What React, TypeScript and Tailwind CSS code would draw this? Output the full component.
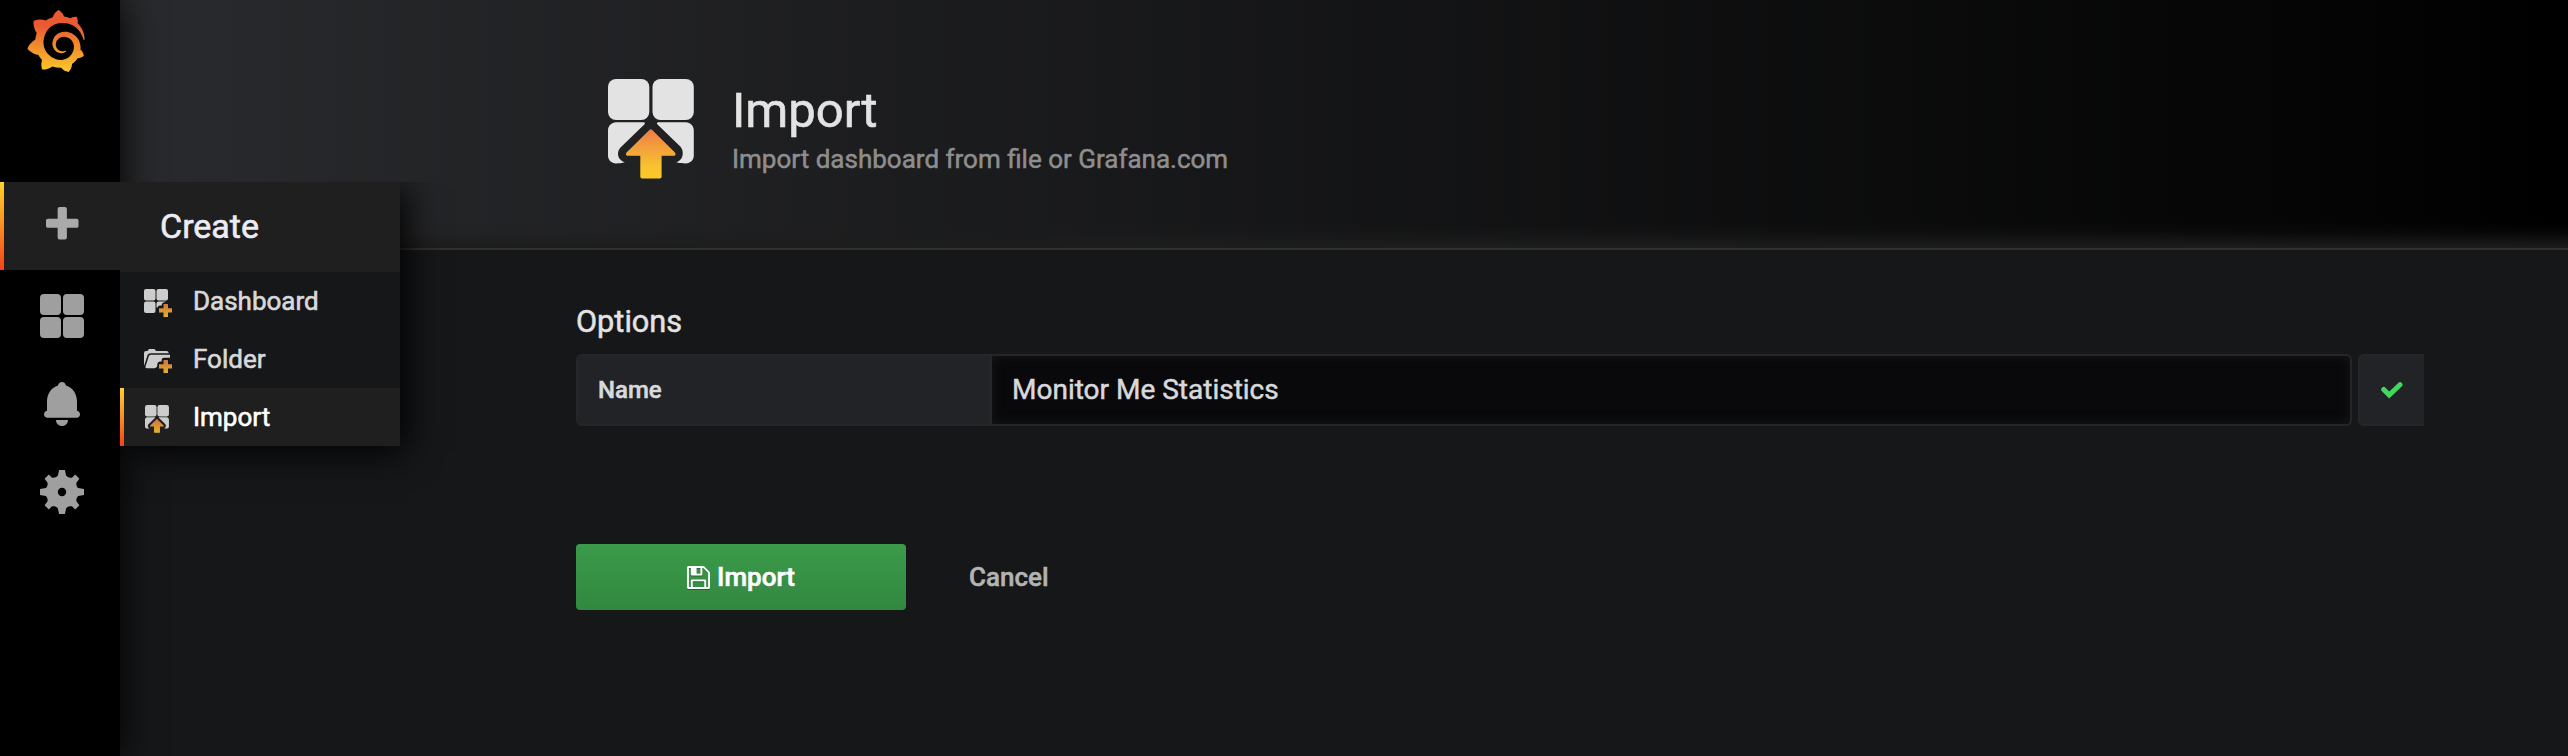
import React from "react";
import { SiGrafana } from "react-icons/si";

function GrafanaLogo() {
  return (
    <>
      <svg className="absolute h-0 w-0">
        <defs>
          <linearGradient id="logo" x1="0" y1="0" x2="0" y2="1">
            <stop offset="0.25" stopColor="#ea5931" />
            <stop offset="1" stopColor="#fbca2a" />
          </linearGradient>
        </defs>
      </svg>
      <SiGrafana className="block h-[62px] w-[62px]" fill="url(#logo)" />
    </>
  );
}

function Tiles({ className }: { className: string }) {
  return (
    <svg className={className} viewBox="0 0 44 44" fill="currentColor">
      <rect width="21" height="21" rx="4" />
      <rect x="23" width="21" height="21" rx="4" />
      <rect y="23" width="21" height="21" rx="4" />
      <rect x="23" y="23" width="21" height="21" rx="4" />
    </svg>
  );
}

function Bell() {
  return (
    <svg className="h-[44px] w-[36px]" viewBox="0 0 36 44" fill="currentColor">
      <path d="M18 0C20 0 21.7 1.5 22 3.6C28.5 5.4 33 12 33 19.5V28.8C34.8 29.2 36 30.6 36 32.3C36 34.3 34.5 35.7 32.5 35.7H3.5C1.5 35.7 0 34.3 0 32.3C0 30.6 1.2 29.2 3 28.8V19.5C3 12 7.5 5.4 14 3.6C14.3 1.5 16 0 18 0Z" />
      <path d="M12 38H24C24 41.5 21.3 44 18 44S12 41.5 12 38Z" />
    </svg>
  );
}

function Gear() {
  return (
    <svg className="h-[44px] w-[44px]" viewBox="-22 -22 44 44" fill="currentColor">
      <path
        fillRule="evenodd"
        d="M-2.9 -22H2.9L4.2 -16.2C5.8 -14.4 8.6 -14 10.2 -14.6L13.2 -17.4L17.4 -13.2L14.6 -9.6C14 -8 14.4 -5.6 16.2 -4L22 -2.9V2.9L16.2 4C14.4 5.6 14 8 14.6 9.6L17.4 13.2L13.2 17.4L10.2 14.6C8.6 14 5.8 14.4 4.2 16.2L2.9 22H-2.9L-4.2 16.2C-5.8 14.4 -8.6 14 -10.2 14.6L-13.2 17.4L-17.4 13.2L-14.6 9.6C-14 8 -14.4 5.6 -16.2 4L-22 2.9V-2.9L-16.2 -4C-14.4 -5.6 -14 -8 -14.6 -9.6L-17.4 -13.2L-13.2 -17.4L-10.2 -14.6C-8.6 -14 -5.8 -14.4 -4.2 -16.2ZM0 -4.2A4.2 4.2 0 1 0 0 4.2A4.2 4.2 0 1 0 0 -4.2Z"
      />
    </svg>
  );
}

function OrangeGradient({ id }: { id: string }) {
  return (
    <defs>
      <linearGradient id={id} x1="0" y1="0" x2="0" y2="1">
        <stop offset="0" stopColor="#ee7c49" />
        <stop offset="0.75" stopColor="#f8c22e" />
        <stop offset="1" stopColor="#fbca28" />
      </linearGradient>
    </defs>
  );
}

function MutedOrangeGradient({ id }: { id: string }) {
  return (
    <defs>
      <linearGradient id={id} x1="0" y1="0" x2="0" y2="1">
        <stop offset="0" stopColor="#d3733f" />
        <stop offset="1" stopColor="#e0b42a" />
      </linearGradient>
    </defs>
  );
}

function ImportIcon({ className, id, muted }: { className: string; id: string; muted?: boolean }) {
  return (
    <svg className={className} viewBox="0 0 86 100" fill="currentColor">
      {muted ? <MutedOrangeGradient id={id} /> : <OrangeGradient id={id} />}
      <rect width="41.3" height="41" rx="8" />
      <rect x="44.5" width="41.3" height="41" rx="8" />
      <path d="M8 43.3H35.5C37 43.3 37.3 44.5 36.3 45.5L12.5 68.5C9.3 72 9.3 77 12 80.3C13.5 82 15 82.7 16.8 83.3C14 84.3 11 84.4 8 84.4C3.5 84.4 0 81 0 76.5V51.3C0 47 3.5 43.3 8 43.3Z" />
      <path d="M77.8 43.3H50.3C48.8 43.3 48.5 44.5 49.5 45.5L72.3 67.5C75.5 71 75.5 77 72.8 80.3C71.3 82 70 82.7 68.2 83.3C71 84.3 74 84.4 77.8 84.4C82.3 84.4 85.8 81 85.8 76.5V51.3C85.8 47 82.3 43.3 77.8 43.3Z" />
      <path
        fill={`url(#${id})`}
        d="M41.4 50.9C42.3 50 43.3 50 44.2 50.9L66.7 73.2C68.3 75 67.5 76.8 65.5 76.8H53.6V97.5C53.6 98.8 53 99.4 51.7 99.4H34.3C33 99.4 32.3 98.8 32.3 97.5V76.8H20C18 76.8 17.2 75 18.8 73.2Z"
      />
    </svg>
  );
}

function DashboardPlus() {
  return (
    <svg className="h-[28px] w-[28px]" viewBox="0 0 28 28" fill="currentColor">
      <MutedOrangeGradient id="dash-plus" />
      <rect width="11.5" height="11.5" rx="2" />
      <rect x="12.5" width="11.5" height="11.5" rx="2" />
      <rect y="12.5" width="11.5" height="11.5" rx="2" />
      <path d="M14.5 12.5H22Q21.5 13.2 19.5 13.4Q18 13.6 17.8 15.5V16.5H16Q14 16.5 13.6 18.5H12.5V14.5Q12.5 12.5 14.5 12.5Z" />
      <path fill="url(#dash-plus)" d="M19.5 15H24V19.3H28V23.6H24V28H19.5V23.6H15V19.3H19.5Z" />
    </svg>
  );
}

function FolderPlus() {
  return (
    <svg className="h-[24px] w-[28px]" viewBox="0 0 28 24" fill="currentColor">
      <MutedOrangeGradient id="folder-plus" />
      <path d="M2 2H3.5L5 0H10.5L12 2H22.5Q24.5 2 24.8 4.3H7Q4.2 4.3 3.6 6L0.2 16.5H0V4Q0 2 2 2Z" />
      <path d="M6.7 5.8H26V8.8H20Q18 8.8 17.7 10.5V12.5H16Q13.5 12.7 13.3 15V17Q12.8 19 10.5 19.2H2.5Q1 19 1.5 17.5L4.8 7.3Q5.2 5.8 6.7 5.8Z" />
      <path fill="url(#folder-plus)" d="M19.5 11H24V15.3H28V19.6H24V24H19.5V19.6H15V15.3H19.5Z" />
    </svg>
  );
}

function SaveIcon() {
  return (
    <svg className="h-[23px] w-[23px] drop-shadow-[0_1px_0_rgba(0,0,0,0.3)]" viewBox="0 0 1536 1536" fill="currentColor">
      <path d="M384 1408h768v-384H384v384zm896 0h128V512q0-14-10-38.500t-20-34.500l-281-281q-10-10-34-20t-39-10v416q0 40-28 68t-68 28H352q-40 0-68-28t-28-68V128H128v1280h128V992q0-40 28-68t68-28h832q40 0 68 28t28 68v416zM896 480V160q0-13-9.500-22.500T864 128H672q-13 0-22.500 9.500T640 160v320q0 13 9.500 22.500T672 512h192q13 0 22.500-9.500T896 480zm640 32v928q0 40-28 68t-68 28H96q-40 0-68-28t-28-68V96q0-40 28-68T96 0h928q40 0 88 20t76 48l280 280q28 28 48 76t20 88z" />
    </svg>
  );
}

function MenuItem({ icon, label, active }: { icon: React.ReactNode; label: string; active?: boolean }) {
  return (
    <a className={active ? "flex h-[58px] items-center bg-[#1f1f20] text-white" : "flex h-[58px] items-center text-[#d8d9da]"}>
      <span className={active ? "h-full w-1 bg-[linear-gradient(#fed42a,#f8421a)]" : "h-full w-1"} />
      <span className="ml-5 flex w-[49px] items-center pt-1 text-[#cdcdce]">{icon}</span>
      <span className="text-[26px] leading-none [-webkit-text-stroke:0.6px_currentColor]">{label}</span>
    </a>
  );
}

export default function App() {
  return (
    <div className="flex h-[756px] w-full overflow-hidden bg-[#161719] font-[Roboto,sans-serif] text-[#d8d9da]">
      <aside className="relative z-10 flex h-full w-[120px] shrink-0 flex-col bg-black text-[#9f9f9f] shadow-[0_0_36px_black]">
        <div className="h-[182px] pt-[10px] pl-[25px]">
          <GrafanaLogo />
        </div>
        <nav className="flex flex-col">
          <div className="relative flex h-[88px] items-center bg-[#1f1f20]">
            <span className="h-full w-1 bg-[linear-gradient(#fed42a,#f8421a)]" />
            <svg className="mb-[5px] ml-[42px] h-[33px] w-[33px]" viewBox="0 0 34 34" fill="#aaaaaa">
              <path d="M14 0H19.500Q21.500 0 21.500 2V12H31.500Q33.500 12 33.500 14V19.500Q33.500 21.500 31.500 21.500H21.500V31.500Q21.500 33.500 19.500 33.500H14Q12 33.500 12 31.500V21.500H2Q0 21.500 0 19.500V14Q0 12 2 12H12V2Q12 0 14 0Z" />
            </svg>
            <div className="absolute top-0 left-[120px] flex w-[280px] flex-col bg-[#161719] shadow-[5px_5px_34px_black] [clip-path:inset(0_-80px_-80px_0)]">
              <div className="h-[90px] bg-[#1f1f20] pl-10 text-[34px] leading-[88px] text-[#ececf4] [-webkit-text-stroke:0.6px_currentColor]">
                Create
              </div>
              <MenuItem icon={<DashboardPlus />} label="Dashboard" />
              <MenuItem icon={<FolderPlus />} label="Folder" />
              <MenuItem icon={<ImportIcon id="menu-import" muted className="ml-px h-[28px] w-[24px]" />} label="Import" active />
            </div>
          </div>
          <div className="flex h-[88px] items-center pt-1 pl-10">
            <Tiles className="h-[44px] w-[44px]" />
          </div>
          <div className="flex h-[88px] items-center pt-1 pl-[44px]">
            <Bell />
          </div>
          <div className="flex h-[88px] items-center pt-1 pl-10">
            <Gear />
          </div>
        </nav>
      </aside>

      <div className="flex min-w-0 flex-1 flex-col">
        <header className="flex h-[250px] shrink-0 border-b-2 border-[#303031] bg-[linear-gradient(to_top,#1d1d1d,#1d1d1d99_8px,#1d1d1d33_16px,#1d1d1d00_26px),linear-gradient(to_right,#292a2d,#000000)] pt-[79px] pl-[488px]">
          <ImportIcon id="header-import" className="h-[100px] w-[86px] text-[#e3e3e3]" />
          <div className="pl-[38px]">
            <h1 className="mt-[5px] text-[49px] leading-[54px] text-[#e3e3e3] [-webkit-text-stroke:0.6px_currentColor]">Import</h1>
            <p className="mt-[5px] text-[26px] leading-8 text-[#8e8e8e] [-webkit-text-stroke:0.5px_currentColor]">
              Import dashboard from file or Grafana.com
            </p>
          </div>
        </header>
        <main className="flex flex-col pt-[52px] pl-[456px]">
          <h2 className="text-[30.700px] leading-10 text-[#e3e3e3] [-webkit-text-stroke:0.5px_currentColor]">Options</h2>
          <div className="mt-3 flex h-[72px]">
            <label className="flex w-[416px] items-center rounded-l-[6px] border-2 border-[#262628] bg-[#212327] pl-5 text-[24px] font-medium [-webkit-text-stroke:0.5px_currentColor]">
              Name
            </label>
            <div className="flex w-[1360px] items-center rounded-r-[6px] border-2 border-l-0 border-[#262628] bg-[#09090b] pl-[20px] text-[28px] shadow-[inset_0_0_12px_#161719] [-webkit-text-stroke:0.5px_currentColor]">
              Monitor Me Statistics
            </div>
            <div className="ml-[6px] flex w-[66px] items-center rounded-l-[6px] border-2 border-r-0 border-[#262628] bg-[#212327] pl-[21px]">
              <svg className="h-[17px] w-[22px]" viewBox="0 0 22 17" fill="none">
                <path d="M2.7 7.500L8.200 13L19 2.700" stroke="#3cdb5c" strokeWidth="5" strokeLinecap="round" strokeLinejoin="miter" />
              </svg>
            </div>
          </div>
          <div className="mt-[118px] flex items-center">
            <button className="flex h-[66px] w-[330px] items-center justify-center gap-[7px] rounded-[4px] bg-[linear-gradient(#3b9b4a,#328840)] text-[26px] font-medium text-white [-webkit-text-stroke:0.6px_currentColor] [text-shadow:0_1px_0_rgba(0,0,0,0.3)]">
              <SaveIcon />
              Import
            </button>
            <a className="ml-[63px] text-[26px] font-medium text-[#b3b3b3] [-webkit-text-stroke:0.5px_currentColor]">Cancel</a>
          </div>
        </main>
      </div>
    </div>
  );
}
